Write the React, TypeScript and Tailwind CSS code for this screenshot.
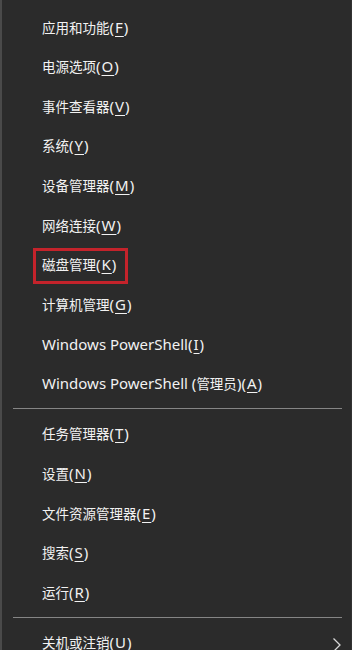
import React from "react";

type Item = { label: string; key: string };

const group1: Item[] = [
  { label: "应用和功能", key: "F" },
  { label: "电源选项", key: "O" },
  { label: "事件查看器", key: "V" },
  { label: "系统", key: "Y" },
  { label: "设备管理器", key: "M" },
  { label: "网络连接", key: "W" },
  { label: "磁盘管理", key: "K" },
  { label: "计算机管理", key: "G" },
  { label: "Windows PowerShell", key: "I" },
  { label: "Windows PowerShell (管理员)", key: "A" },
];

const group2: Item[] = [
  { label: "任务管理器", key: "T" },
  { label: "设置", key: "N" },
  { label: "文件资源管理器", key: "E" },
  { label: "搜索", key: "S" },
  { label: "运行", key: "R" },
];

function Label({ text }: { text: string }) {
  const parts = text.match(/[\u4e00-\u9fff]+|[^\u4e00-\u9fff]+/g) || [];
  return (
    <>
      {parts.map((p, i) =>
        /[\u4e00-\u9fff]/.test(p) ? (
          <span key={i} className="text-[13.5px]">{p}</span>
        ) : (
          <span key={i} className="text-[15px]">{p}</span>
        )
      )}
    </>
  );
}

function Mnemonic({ k }: { k: string }) {
  return (
    <span className="text-[15px] tracking-[1px]">
      (<span className="underline underline-offset-[3px]">{k}</span>)
    </span>
  );
}

function Row({ item, highlight }: { item: Item; highlight?: boolean }) {
  return (
    <div className="h-[39.6px] flex items-center pl-[40px] pr-[10px] relative">
      {highlight && (
        <div className="absolute left-[31px] top-[3px] w-[95px] h-[36px] border-[3px] border-[#c4232b]" />
      )}
      <span className="text-[#f2f2f2] whitespace-nowrap leading-none">
        <Label text={item.label} />
        <Mnemonic k={item.key} />
      </span>
    </div>
  );
}

export default function App() {
  return (
    <div
      className="w-[352px] h-[650px] overflow-hidden bg-[#2b2b2b] border-l-2 border-l-[#4a4a4a] border-r border-r-[#333333] pt-[7px]"
      style={{ fontFamily: '"Segoe UI", "Noto Sans", "Noto Sans CJK SC", sans-serif' }}
    >
      {group1.map((it) => (
        <Row key={it.key} item={it} highlight={it.key === "K"} />
      ))}
      <div className="ml-[11px] mr-[9px] my-[5px] h-px bg-[#858585]" />
      {group2.map((it) => (
        <Row key={it.key} item={it} />
      ))}
      <div className="ml-[11px] mr-[9px] my-[5px] h-px bg-[#858585]" />
      <div className="h-[39.6px] flex items-center justify-between pl-[40px] pr-[9px]">
        <span className="text-[#f2f2f2] whitespace-nowrap leading-none">
          <Label text="关机或注销" />
          <Mnemonic k="U" />
        </span>
        <svg width="10" height="16" viewBox="0 0 10 16" className="mt-[4px]">
          <path d="M1.5 1.5 L8 8 L1.5 14.5" fill="none" stroke="#d8d8d8" strokeWidth="1.3" />
        </svg>
      </div>
    </div>
  );
}
